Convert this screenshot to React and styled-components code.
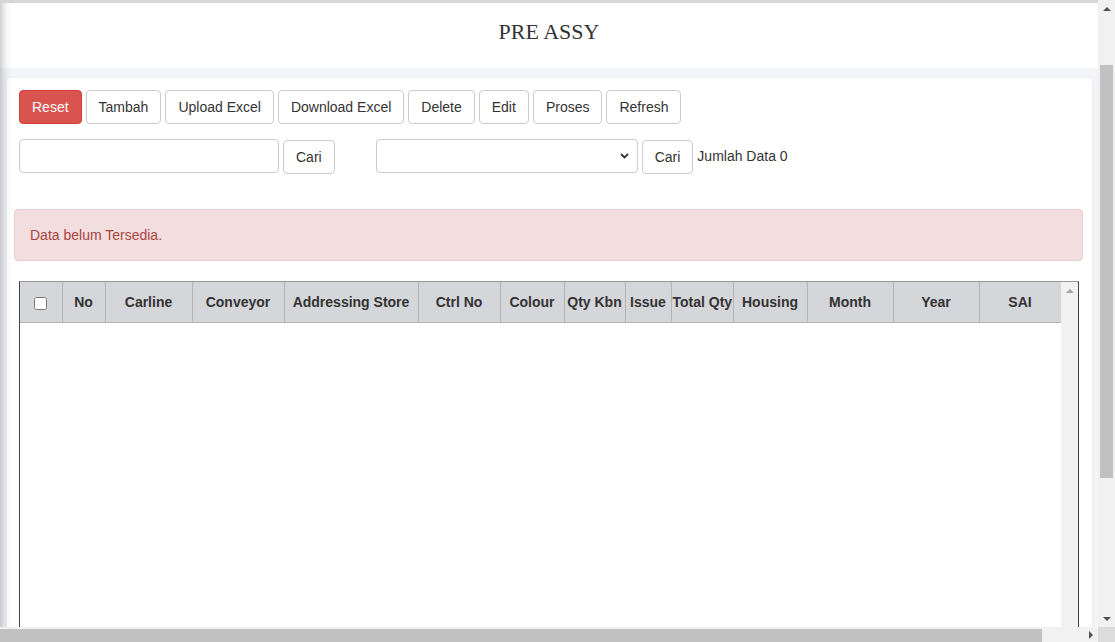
import React from 'react'
import styled, { createGlobalStyle, css } from 'styled-components'

const GlobalStyle = createGlobalStyle`
  html, body {
    margin: 0;
    padding: 0;
    overflow: hidden;
  }
  body {
    font-family: "Liberation Sans", Arial, sans-serif;
    font-size: 14px;
    color: #333;
  }
  * {
    box-sizing: border-box;
  }
`

const Viewport = styled.div`
  display: grid;
  grid-template-columns: 1fr 17px;
  grid-template-rows: 1fr 15px;
  width: 100vw;
  height: 100vh;
`

const Main = styled.div`
  position: relative;
  overflow: hidden;
  background: #f3f4f8;
  border-top: 3px solid #d6d6d6;

  &::before {
    content: "";
    position: absolute;
    top: 0;
    bottom: 0;
    left: 0;
    width: 12px;
    background: linear-gradient(to right, rgba(0, 0, 10, 0.18) 0, rgba(0, 0, 10, 0.1) 3px, rgba(0, 0, 0, 0.03) 7px, rgba(0, 0, 0, 0) 12px);
    pointer-events: none;
    z-index: 2;
  }
`

const Header = styled.header`
  height: 65px;
  background: #fff;
  display: flex;
  justify-content: center;
  align-items: flex-start;
  padding-top: 15px;
`

const Title = styled.h1`
  margin: 0;
  font-family: "Liberation Serif", "DejaVu Serif", serif;
  font-weight: 400;
  font-size: 22px;
  line-height: 28px;
  color: #333;
`

const Content = styled.div`
  padding: 10px 6px 0 7px;
`

const Card = styled.div`
  background: #fff;
  border-radius: 4px;
  padding: 12px;
  box-shadow: 0 1px 4px rgba(0, 0, 0, 0.06);
`

const Toolbar = styled.div`
  display: flex;
  gap: 4px;
`

const Button = styled.button`
  height: 34px;
  padding: 6px 12px;
  font-family: inherit;
  font-size: 14px;
  line-height: 20px;
  color: #333;
  background: #fff;
  border: 1px solid #ccc;
  border-radius: 4px;
  white-space: nowrap;
  cursor: pointer;
  margin-top: ${p => p.$offset || 0}px;

  ${p => p.$danger && css`
    color: #fff;
    background: #d9534f;
    border-color: #d43f3a;
  `}
`

const SearchRow = styled.div`
  display: flex;
  align-items: flex-start;
  gap: 4px;
  margin-top: 15px;
`

const TextInput = styled.input`
  width: 260px;
  height: 34px;
  border: 1px solid #ccc;
  border-radius: 4px;
  padding: 6px 12px;
  font-family: inherit;
  font-size: 14px;
  outline: none;
`

const SelectWrap = styled.div`
  position: relative;
  width: 262px;
  height: 34px;
  margin-left: 37px;
`

const Select = styled.select`
  appearance: none;
  width: 100%;
  height: 100%;
  border: 1px solid #ccc;
  border-radius: 4px;
  background: #fff;
  font-family: inherit;
  font-size: 14px;
  outline: none;
`

const Chevron = styled.svg`
  position: absolute;
  right: 9px;
  top: 14px;
  pointer-events: none;
`

const Count = styled.span`
  line-height: 34px;
  color: #333;
`

const Alert = styled.div`
  margin: 35px -3px 20px -5px;
  padding: 15px;
  border: 1px solid #ebccd1;
  border-radius: 4px;
  background: #f2dede;
  color: #a94442;
  line-height: 20px;
`

const TableBox = styled.div`
  display: flex;
  width: 1060px;
  height: 420px;
  border: 1px solid #444;
  border-top-color: #9a9a9a;
`

const TableScroll = styled.div`
  flex: 1;
  overflow: hidden;
`

const Table = styled.table`
  width: 1041px;
  table-layout: fixed;
  border-collapse: collapse;
`

const Th = styled.th`
  height: 40px;
  padding: 0 1px;
  background: #d5d6da;
  border-right: 1px solid #b3b3b5;
  border-bottom: 1px solid #b3b3b5;
  font-size: 14px;
  font-weight: 700;
  color: #333;
  text-align: center;
  white-space: nowrap;
  overflow: hidden;
`

const Check = styled.input`
  margin: 0;
  width: 13px;
  height: 13px;
  vertical-align: middle;
`

const InnerTrack = styled.div`
  width: 17px;
  background: #f1f1f1;
  display: flex;
  justify-content: center;
  padding-top: 7px;
`

const Arrow = styled.span`
  width: 0;
  height: 0;
  border-style: solid;
  border-color: transparent;
  ${p => p.$dir === 'up' && css`
    border-width: 0 4px 4px 4px;
    border-bottom-color: ${p.$color || '#505050'};
  `}
  ${p => p.$dir === 'down' && css`
    border-width: 4px 4px 0 4px;
    border-top-color: ${p.$color || '#505050'};
  `}
  ${p => p.$dir === 'right' && css`
    border-width: 4px 0 4px 4px;
    border-left-color: ${p.$color || '#505050'};
  `}
`

const VScroll = styled.div`
  background: #f1f1f1;
  display: flex;
  flex-direction: column;
  align-items: center;
`

const ArrowBox = styled.div`
  width: 17px;
  height: 17px;
  flex: none;
  display: flex;
  align-items: center;
  justify-content: center;
`

const VTrack = styled.div`
  flex: 1;
  width: 100%;
  padding: 48px 2px 0;
`

const VThumb = styled.div`
  height: 413px;
  background: #c1c1c1;
`

const HScroll = styled.div`
  background: #f1f1f1;
  display: flex;
  align-items: flex-end;
`

const HThumb = styled.div`
  width: 1042px;
  height: 13px;
  background: #c1c1c1;
`

const HEnd = styled.div`
  flex: 1;
  height: 15px;
  display: flex;
  align-items: center;
  justify-content: flex-end;
  padding-right: 5px;
`

const Corner = styled.div`
  background: #dcdcdc;
`

const columns = [
  { label: '', width: 42 },
  { label: 'No', width: 43 },
  { label: 'Carline', width: 87 },
  { label: 'Conveyor', width: 92 },
  { label: 'Addressing Store', width: 134 },
  { label: 'Ctrl No', width: 82 },
  { label: 'Colour', width: 64 },
  { label: 'Qty Kbn', width: 61 },
  { label: 'Issue', width: 46 },
  { label: 'Total Qty', width: 62 },
  { label: 'Housing', width: 74 },
  { label: 'Month', width: 86 },
  { label: 'Year', width: 86 },
  { label: 'SAI', width: 82 },
]

const actions = ['Tambah', 'Upload Excel', 'Download Excel', 'Delete', 'Edit', 'Proses', 'Refresh']

const App = () => {
  return (
    <>
      <GlobalStyle />
      <Viewport>
        <Main>
          <Header>
            <Title>PRE ASSY</Title>
          </Header>
          <Content>
            <Card>
              <Toolbar>
                <Button $danger>Reset</Button>
                {actions.map(a => <Button key={a}>{a}</Button>)}
              </Toolbar>

              <SearchRow>
                <TextInput />
                <Button $offset={1}>Cari</Button>
                <SelectWrap>
                  <Select defaultValue="">
                    <option value=""></option>
                  </Select>
                  <Chevron width="9" height="6" viewBox="0 0 9 6">
                    <path d="M1 1 L4.5 4.5 L8 1" fill="none" stroke="#333" strokeWidth="1.8" />
                  </Chevron>
                </SelectWrap>
                <Button $offset={1}>Cari</Button>
                <Count>Jumlah Data 0</Count>
              </SearchRow>

              <Alert>Data belum Tersedia.</Alert>

              <TableBox>
                <TableScroll>
                  <Table>
                    <colgroup>
                      {columns.map((c, i) => <col key={i} style={{ width: c.width }} />)}
                    </colgroup>
                    <thead>
                      <tr>
                        {columns.map((c, i) => (
                          <Th key={i}>{i === 0 ? <Check type="checkbox" /> : c.label}</Th>
                        ))}
                      </tr>
                    </thead>
                    <tbody />
                  </Table>
                </TableScroll>
                <InnerTrack>
                  <Arrow $dir="up" $color="#a3a3a3" />
                </InnerTrack>
              </TableBox>
            </Card>
          </Content>
        </Main>

        <VScroll>
          <ArrowBox><Arrow $dir="up" /></ArrowBox>
          <VTrack><VThumb /></VTrack>
          <ArrowBox><Arrow $dir="down" /></ArrowBox>
        </VScroll>

        <HScroll>
          <HThumb />
          <HEnd><Arrow $dir="right" /></HEnd>
        </HScroll>
        <Corner />
      </Viewport>
    </>
  )
}

export default App
